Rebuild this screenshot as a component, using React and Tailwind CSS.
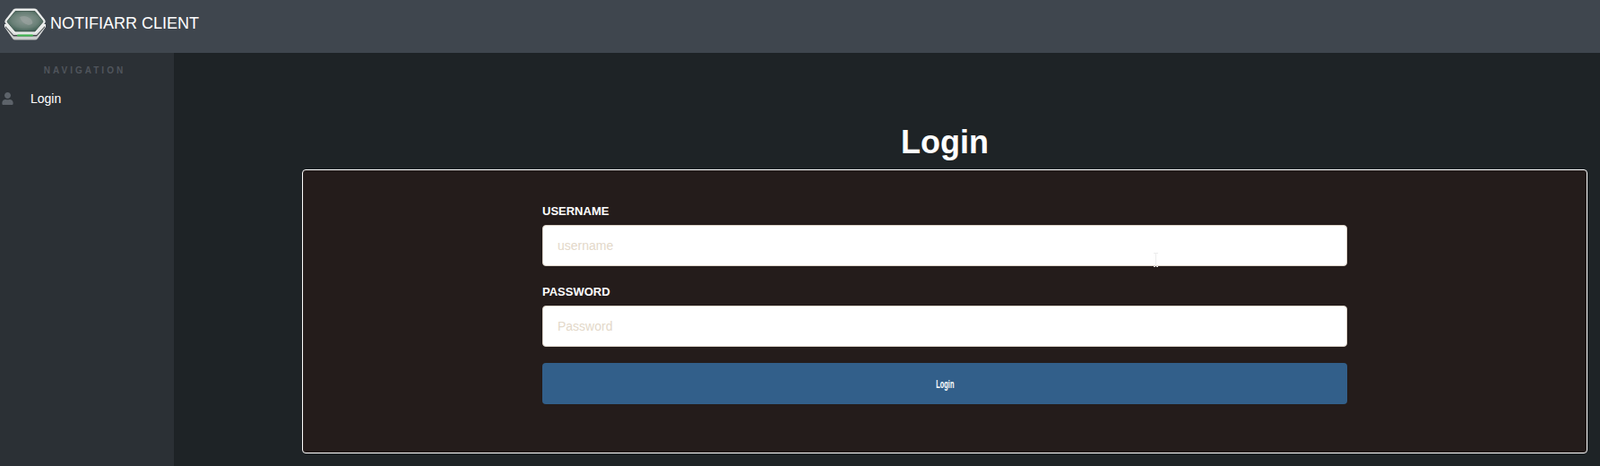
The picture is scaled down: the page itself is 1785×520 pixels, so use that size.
import React from 'react';
import { FaUser } from 'react-icons/fa';

const Logo = () => (
  <svg width="48" height="38" viewBox="0 0 48 38" className="shrink-0">
    <defs>
      <radialGradient id="lens" cx="0.5" cy="0.45" r="0.62">
        <stop offset="0" stopColor="#8f9c97" />
        <stop offset="0.6" stopColor="#6a8077" />
        <stop offset="1" stopColor="#35574b" />
      </radialGradient>
      <linearGradient id="plate" x1="0" y1="0" x2="0" y2="1">
        <stop offset="0" stopColor="#f6f7f6" />
        <stop offset="1" stopColor="#c4c7c6" />
      </linearGradient>
    </defs>
    {/* base */}
    <path d="M1 19 L1 22 L10 35 Q11 36.5 13 36.5 L35 36.5 Q37 36.5 38 35 L47 22 L47 19 Z" fill="url(#plate)" />
    <path d="M2 21 L11 31 L37 31 L46 21 L46 22.5 L37 32.5 L11 32.5 L2 22.5 Z" fill="#44494c" />
    <rect x="15" y="30.5" width="18" height="2" rx="1" fill="#3fb850" />
    {/* top plate */}
    <path d="M11 2.5 Q12 1.5 14 1.5 L34 1.5 Q36 1.5 37 2.5 L46 14 Q47.5 16 46 18 L37 28.5 Q36 29.5 34 29.5 L14 29.5 Q12 29.5 11 28.5 L2 18 Q.5 16 2 14 Z" fill="#e9ebea" />
    <path d="M13 4.5 L35 4.5 L43.5 15 Q44.5 16 43.5 17 L35 27 L13 27 L4.5 17 Q3.5 16 4.5 15 Z" fill="url(#lens)" stroke="#3b5047" strokeWidth="0.8" strokeLinejoin="round" />
    <path d="M18 11 Q25 8 31 14 Q35 19 28 20 Q20 18 18 11 Z" fill="#9aa3a0" opacity="0.7" />
  </svg>
);

const Field = ({ label, placeholder, type, className }) => (
  <div className={className}>
    <label className="block mb-[5px] h-[21px] text-[13px] leading-[21px] font-bold text-white">{label}</label>
    <input
      type={type}
      placeholder={placeholder}
      className="block w-full h-[46px] px-4 rounded-[4px] bg-white border border-[#ded5cb] text-[14px] text-gray-800 placeholder:text-[#e3d8c9] outline-none"
    />
  </div>
);

export default function App() {
  return (
    <div className="w-[1785px] h-[520px] overflow-hidden flex flex-col bg-[#1e2326] font-['Liberation_Sans',Arial,sans-serif]">
      {/* Header */}
      <header className="h-[59px] shrink-0 flex items-start pl-1 pt-[8px] bg-[#3f464e]">
        <Logo />
        <span className="ml-[4px] mt-[7px] text-[18px] leading-[22px] text-white whitespace-nowrap">NOTIFIARR CLIENT</span>
      </header>

      <div className="flex flex-1 min-h-0">
        {/* Sidebar */}
        <aside className="w-[194px] shrink-0 bg-[#2b3035]">
          <div className="pt-[14px] pr-[5px] h-[33px] text-center text-[10px] leading-[12px] font-bold tracking-[3px] text-[#50555c]">NAVIGATION</div>
          <a className="flex items-center h-[24px] mt-[6px] pl-[2px] text-[14px] text-white">
            <FaUser className="w-[13px] h-[14px] text-[#5d636a]" />
            <span className="ml-[19px]">Login</span>
          </a>
        </aside>

        {/* Contenido */}
        <main className="flex-1 min-w-0 pl-[143px] pr-[14px]">
          <h1 className="mt-[79px] h-[51px] text-center text-[36px] leading-[42px] font-bold text-white">Login</h1>
          <div className="relative h-[317px] rounded-[4px] border border-white bg-[#241c1b] pt-[35px]">
            <form className="w-[898px] mx-auto">
              <Field label="USERNAME" placeholder="username" type="text" />
              <Field label="PASSWORD" placeholder="Password" type="password" className="mt-[18px]" />
              <button type="button" className="block w-full h-[46px] mt-[18px] rounded-[4px] bg-[#325f8a] text-white">
                <span className="inline-block text-[12px] font-bold scale-x-[0.62]">Login</span>
              </button>
            </form>
            {/* Cursor del mouse */}
            <svg width="7" height="17" viewBox="0 0 7 17" className="absolute left-[948px] top-[92px]">
              <path d="M1 .5H6M3.5 .5V15M1 15.5H3M4 15.5H6" stroke="#ececec" fill="none" />
            </svg>
          </div>
        </main>
      </div>
    </div>
  );
}
